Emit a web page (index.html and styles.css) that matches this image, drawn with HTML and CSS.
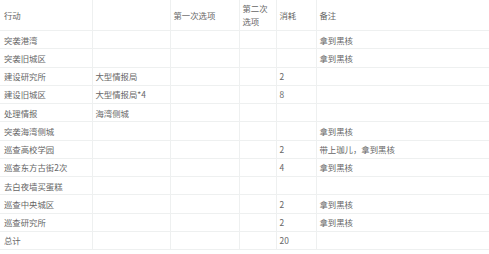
FILE: index.html
```html
<!DOCTYPE html>
<html lang="zh">
<head>
<meta charset="utf-8">
<link rel="stylesheet" href="styles.css">
</head>
<body>
<table class="grid">
  <colgroup>
    <col class="c1"><col class="c2"><col class="c3"><col class="c4"><col class="c5"><col class="c6">
  </colgroup>
  <thead>
    <tr class="head">
      <th>行动</th><th></th><th>第一次选项</th><th>第二次<br>选项</th><th>消耗</th><th>备注</th>
    </tr>
  </thead>
  <tbody>
    <tr><td>突袭港湾</td><td></td><td></td><td></td><td></td><td>拿到黑核</td></tr>
    <tr><td>突袭旧城区</td><td></td><td></td><td></td><td></td><td>拿到黑核</td></tr>
    <tr><td>建设研究所</td><td>大型情报局</td><td></td><td></td><td>2</td><td></td></tr>
    <tr><td>建设旧城区</td><td>大型情报局*4</td><td></td><td></td><td>8</td><td></td></tr>
    <tr><td>处理情报</td><td>海湾侧城</td><td></td><td></td><td></td><td></td></tr>
    <tr><td>突袭海湾侧城</td><td></td><td></td><td></td><td></td><td>拿到黑核</td></tr>
    <tr><td>巡查高校学园</td><td></td><td></td><td></td><td>2</td><td>带上珈儿，拿到黑核</td></tr>
    <tr><td>巡查东方古街2次</td><td></td><td></td><td></td><td>4</td><td>拿到黑核</td></tr>
    <tr><td>去白夜墙买蛋糕</td><td></td><td></td><td></td><td></td><td></td></tr>
    <tr><td>巡查中央城区</td><td></td><td></td><td></td><td>2</td><td>拿到黑核</td></tr>
    <tr><td>巡查研究所</td><td></td><td></td><td></td><td>2</td><td>拿到黑核</td></tr>
    <tr><td>总计</td><td></td><td></td><td></td><td>20</td><td></td></tr>
  </tbody>
</table>
</body>
</html>
```

FILE: styles.css
```css
html, body {
  margin: 0;
  padding: 0;
  background: #ffffff;
}

.grid {
  border-collapse: collapse;
  table-layout: fixed;
  width: 489px;
  font-family: "Noto Sans CJK SC", "Microsoft YaHei", sans-serif;
  font-size: 8.4px;
  color: #666666;
}

.c1 { width: 92px; }
.c2 { width: 78px; }
.c3 { width: 69px; }
.c4 { width: 37px; }
.c5 { width: 40px; }
.c6 { width: 173px; }

.grid th,
.grid td {
  border: 1px solid #eef0f0;
  padding: 0 3px;
  text-align: left;
  font-weight: normal;
  vertical-align: middle;
  white-space: nowrap;
  overflow: hidden;
}

.grid tr:first-child th { border-top: none; }
.grid th:first-child,
.grid td:first-child { border-left: none; padding-left: 4px; }
.grid th:last-child,
.grid td:last-child { border-right: none; }

.head th {
  height: 30px;
  line-height: 13px;
}

.grid tbody td {
  height: 17.25px;
  line-height: 12px;
}
```
